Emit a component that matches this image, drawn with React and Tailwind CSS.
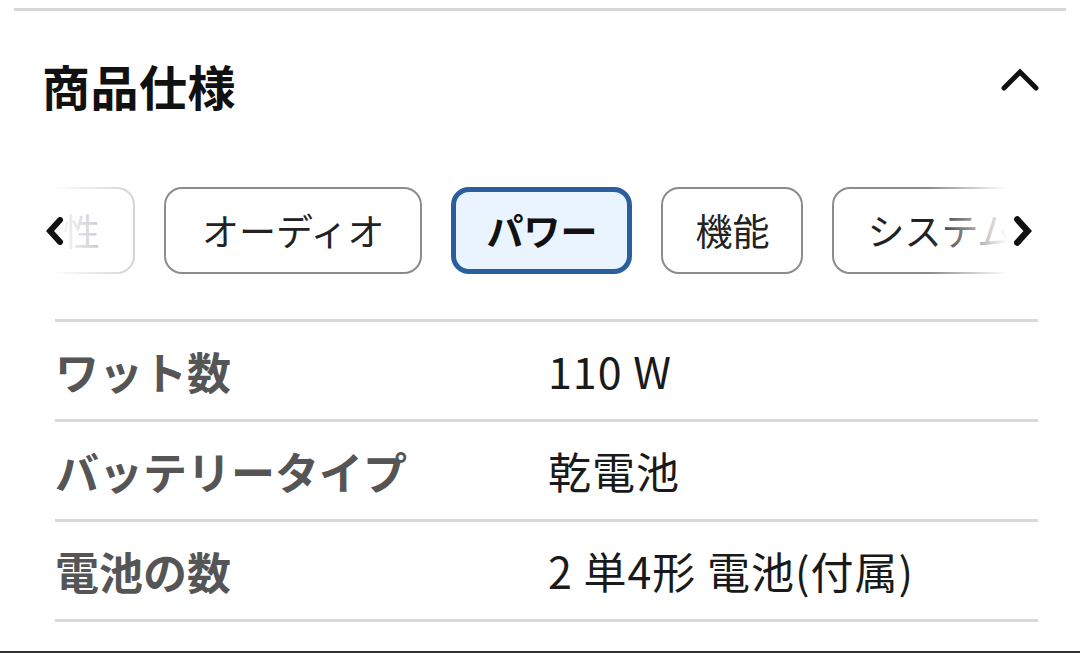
const tabs = [
  { id: "compat", label: "互換性" },
  { id: "audio", label: "オーディオ", pad: "px-[36px]" },
  { id: "power", label: "パワー", active: true },
  { id: "feature", label: "機能", pad: "px-[32px]" },
  { id: "system", label: "システム" },
];

const specs = [
  { label: "ワット数", value: "110 W" },
  { label: "バッテリータイプ", value: "乾電池" },
  { label: "電池の数", value: "2 単4形 電池(付属)" },
];

function Chevron({ dir = "up", className = "" }) {
  const points = {
    up: "3,21 19,5 35,21",
    left: "14,3 4,14 14,25",
    right: "4,3 14,14 4,25",
  }[dir];
  const box = dir === "up" ? "0 0 38 26" : "0 0 18 28";
  return (
    <svg viewBox={box} className={className} fill="none">
      <polyline
        points={points}
        stroke="#111"
        strokeWidth={dir === "up" ? 5 : 6}
        strokeLinecap="round"
        strokeLinejoin="miter"
      />
    </svg>
  );
}

export default function App() {
  return (
    <div className="flex h-[653px] w-[1080px] flex-col overflow-hidden bg-white font-['Noto_Sans_CJK_JP',sans-serif]">
      <div className="mx-[14px] mt-[8px] h-[3px] bg-[#d6d6d6]" />

      <div className="flex h-[148px] items-center justify-between pl-[42px] pr-[41px]">
        <h2 className="text-[48px] font-bold leading-none tracking-[0.5px] text-[#111]">
          商品仕様
        </h2>
        <Chevron dir="up" className="mb-[10px] h-[26px] w-[38px]" />
      </div>

      <div className="relative mx-[40px] mt-[28px] h-[87px] overflow-hidden">
        <div className="-ml-[86px] flex gap-[29px]">
          {tabs.map((tab) => (
            <button
              key={tab.id}
              className={`flex h-[87px] shrink-0 items-center whitespace-nowrap rounded-[18px] text-[37px] leading-none ${tab.active ? "border-[5px] border-[#2a5f9e] bg-[#eaf4ff] px-[30px] font-bold text-[#111]" : `border-2 border-[#8c8c8c] bg-white text-[#222] ${tab.pad || "px-[33px]"}`}`}
            >
              {tab.label}
            </button>
          ))}
        </div>
        <div className="absolute inset-y-0 left-0 flex w-[100px] items-center bg-gradient-to-r from-white from-10% to-white/60">
          <Chevron dir="left" className="ml-[6px] h-[28px] w-[18px]" />
        </div>
        <div className="absolute inset-y-0 right-0 flex w-[110px] items-center justify-end bg-gradient-to-r from-white/0 to-white to-70%">
          <Chevron dir="right" className="mr-[8px] h-[30px] w-[19px]" />
        </div>
      </div>

      <div className="ml-[55px] mr-[42px] mt-[45px]">
        <div className="h-[3px] bg-[#d9d9d9]" />
        {specs.map((row) => (
          <div key={row.label}>
            <div className="grid h-[97px] grid-cols-[493px_1fr] items-center">
              <span className="text-[44px] font-bold leading-none text-[#555]">
                {row.label}
              </span>
              <span className="text-[43px] leading-none tracking-[1px] text-[#1a1a1a]">
                {row.value}
              </span>
            </div>
            <div className="h-[3px] bg-[#d9d9d9]" />
          </div>
        ))}
      </div>

      <div className="mt-auto h-[2px] bg-[#333]" />
    </div>
  );
}
